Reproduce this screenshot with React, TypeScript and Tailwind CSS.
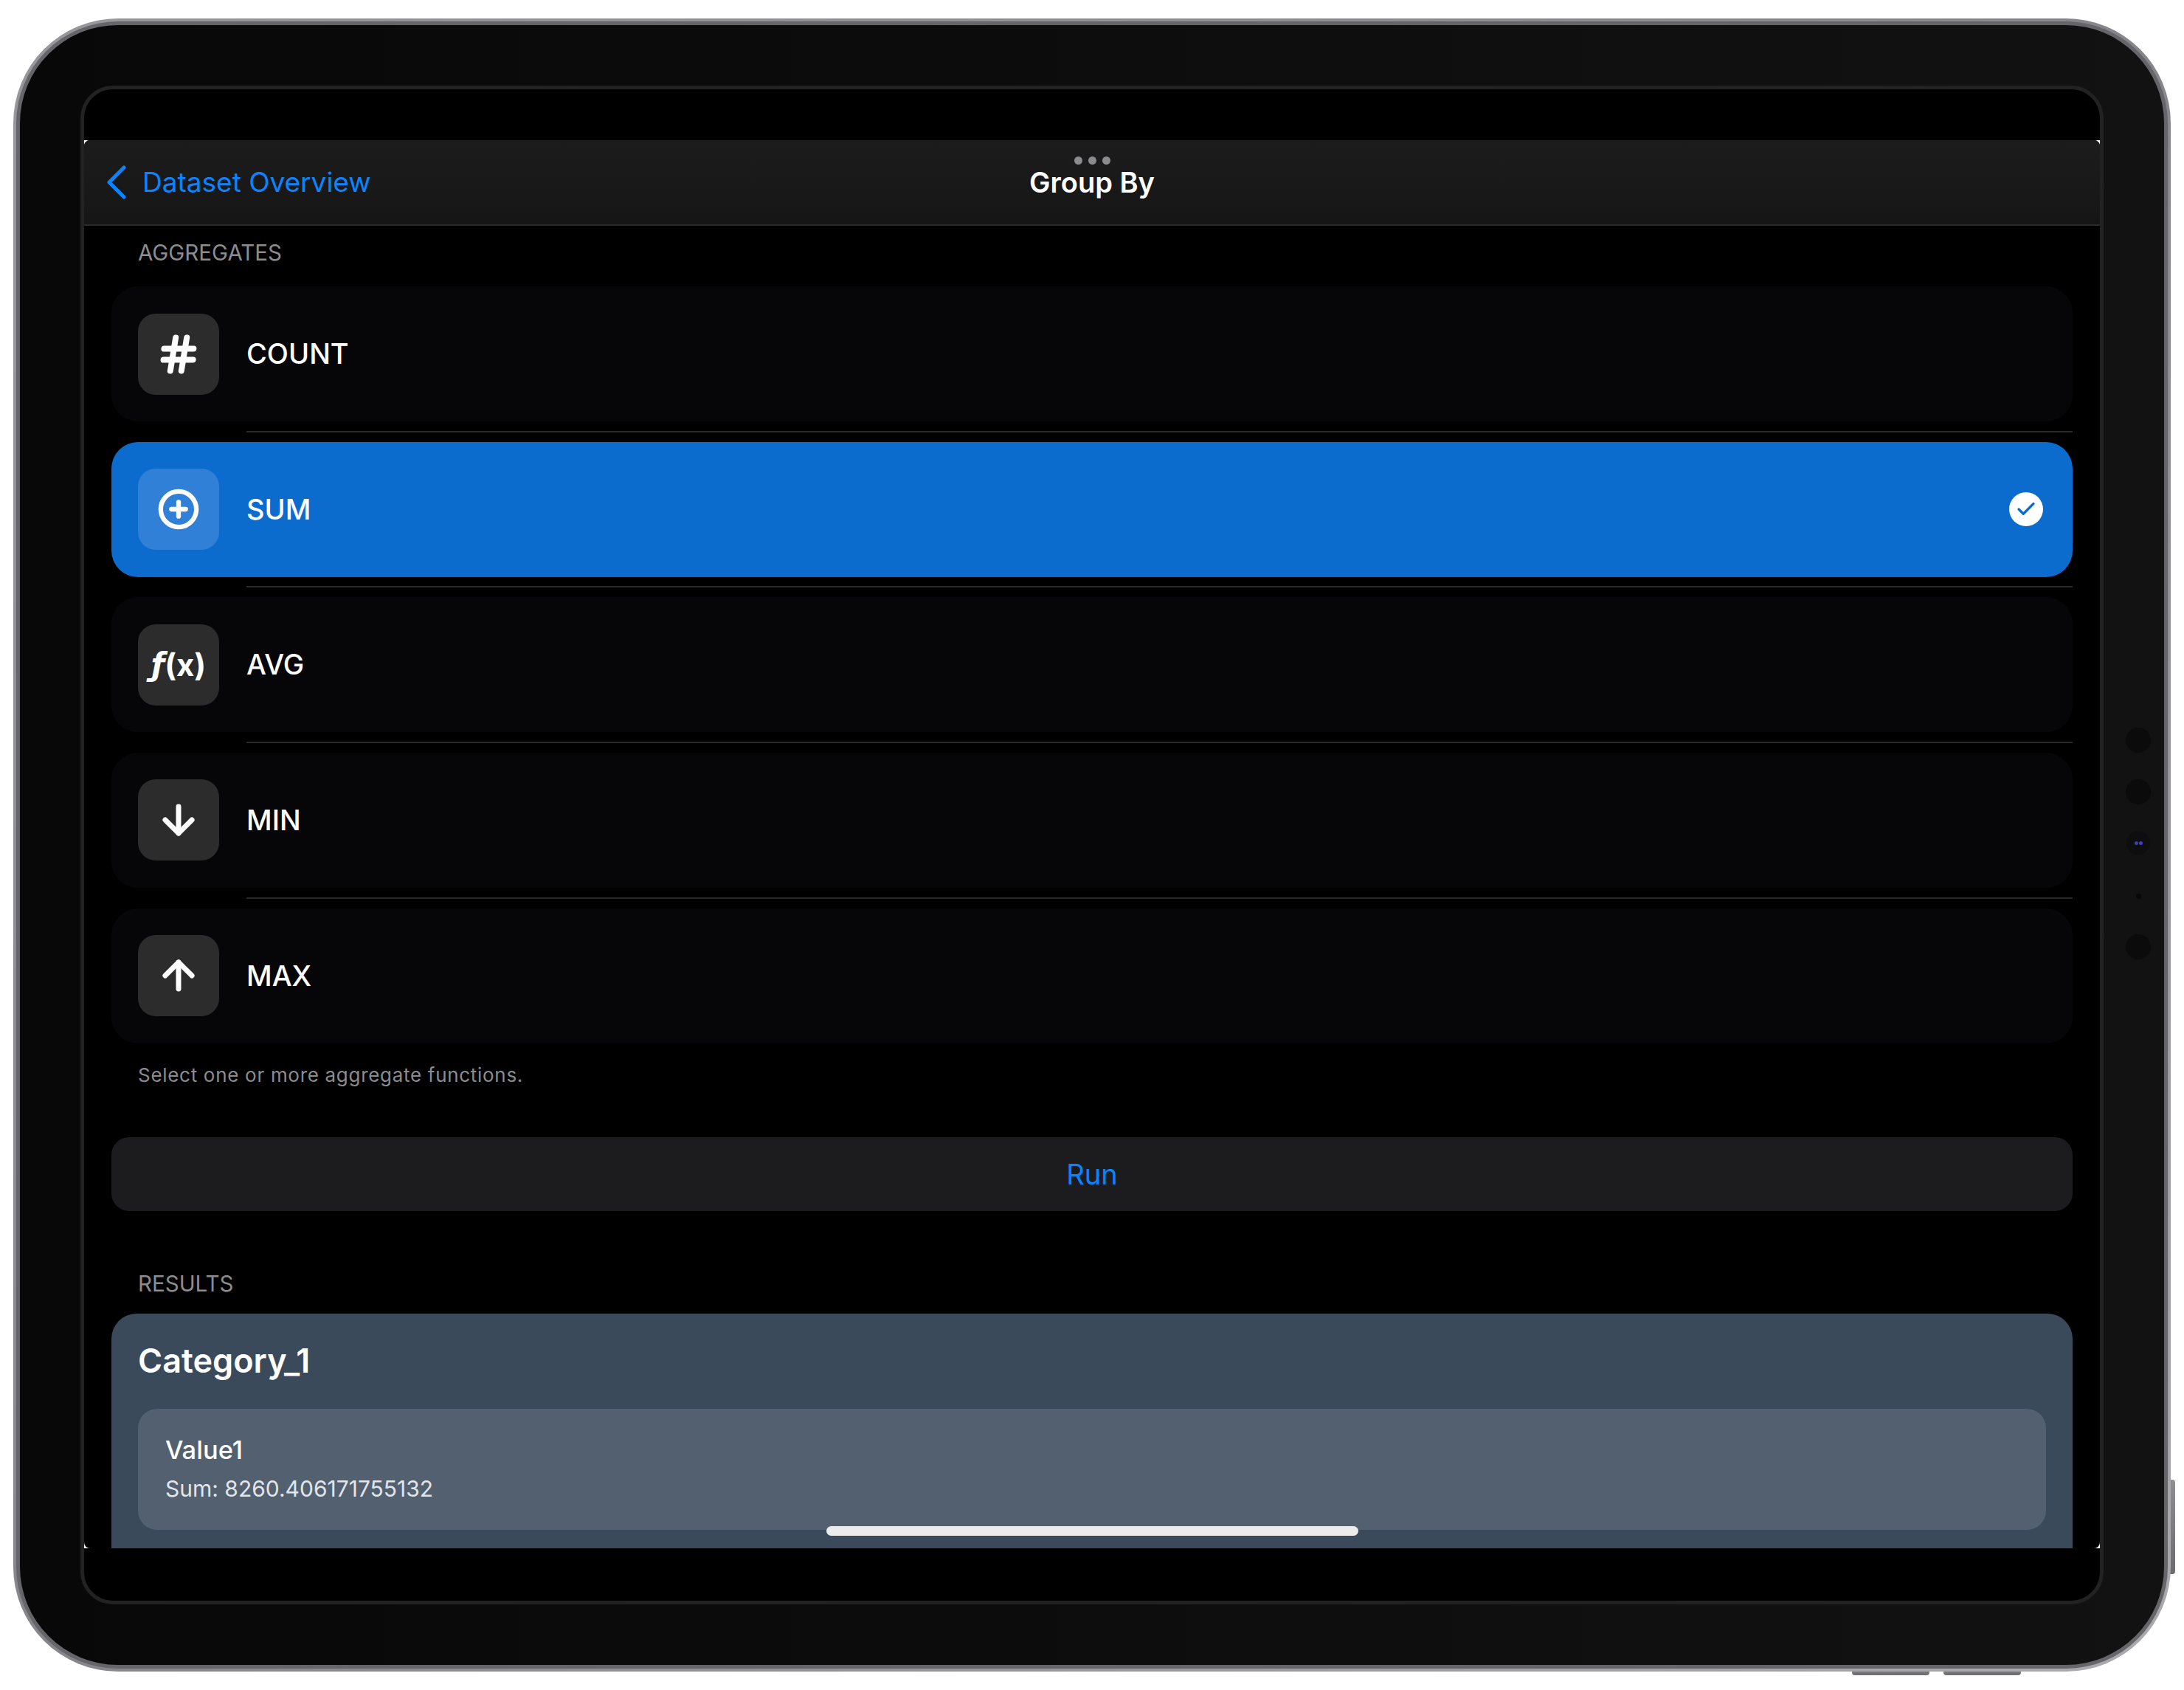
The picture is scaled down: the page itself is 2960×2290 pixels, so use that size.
import { Hash, CirclePlus, ArrowDown, ArrowUp, Check } from 'lucide-react'
import type { ReactNode } from 'react'

const font = { fontFamily: 'Inter, "Liberation Sans", sans-serif' }

type Row = { label: string; icon: ReactNode; selected?: boolean }

const rows: Row[] = [
  { label: 'COUNT', icon: <Hash className="h-[60px] w-[60px] -skew-x-3" strokeWidth={3.2} /> },
  { label: 'SUM', icon: <CirclePlus className="h-[58px] w-[58px]" strokeWidth={2.6} />, selected: true },
  {
    label: 'AVG',
    icon: (
      <span className="flex items-center text-[42px] leading-none font-bold">
        <i className="[font-family:'DejaVu_Sans',sans-serif]">ƒ</i>
        <span>(x)</span>
      </span>
    ),
  },
  { label: 'MIN', icon: <ArrowDown className="h-[62px] w-[62px]" strokeWidth={2.7} /> },
  { label: 'MAX', icon: <ArrowUp className="h-[62px] w-[62px]" strokeWidth={2.7} /> },
]

function AggregateRow({ label, icon, selected }: Row) {
  return (
    <div
      className={`flex h-[183px] items-center rounded-[36px] pr-[40px] pl-[36px] ${
        selected ? 'bg-[#0c6cce]' : 'bg-[#060609]'
      }`}
    >
      <div
        className={`flex h-[110px] w-[110px] items-center justify-center rounded-[24px] text-white ${
          selected ? 'bg-[#3180d8]' : 'bg-[#2c2c2d]'
        }`}
      >
        {icon}
      </div>
      <span className="ml-[37px] flex-1 text-[38px] font-medium text-white">{label}</span>
      {selected && (
        <span className="flex h-[46px] w-[46px] items-center justify-center rounded-full bg-white">
          <Check className="h-[30px] w-[30px] text-[#0c6cce]" strokeWidth={2.6} />
        </span>
      )}
    </div>
  )
}

function Metal({ className }: { className: string }) {
  return <div className={`absolute bg-gradient-to-b from-[#8f8f93] to-[#6c6c70] ${className}`} />
}

export default function App() {
  return (
    <div className="min-h-[2290px] w-[2960px] bg-white pt-[25px] pl-[18px]" style={font}>
      <div className="relative h-[2240px] w-[2924px]">
        <Metal className="top-[1980px] -right-[6px] h-[128px] w-[12px] rounded-r-[4px]" />
        <Metal className="-bottom-[5px] left-[2492px] h-[12px] w-[105px] rounded-b-[4px]" />
        <Metal className="-bottom-[5px] left-[2616px] h-[12px] w-[105px] rounded-b-[4px]" />

        <div className="relative h-full w-full rounded-[142px] bg-gradient-to-br from-[#98989c] via-[#85858a] to-[#ababaf] p-[4px]">
          <div className="h-full w-full rounded-[138px] bg-[#66666a] p-[5px]">
            <div className="h-full w-full rounded-[133px] bg-gradient-to-r from-[#080808] to-[#121212] px-[82px] pt-[82px] pb-[81px]">
              <div className="h-[2058px] w-[2742px] overflow-hidden rounded-[44px] border-[5px] border-[#222223] bg-black pt-[69px]">
                {/* the app window, white only shows in its tiny corners */}
                <div className="h-[1908px] w-[2732px] bg-white">
                  <div className="relative h-full overflow-hidden rounded-[8px] bg-black">
                    <header className="relative grid h-[116px] grid-cols-[1fr_auto_1fr] items-center border-b-2 border-[#2a2a2b] bg-gradient-to-b from-[#1c1c1c] to-[#161616]">
                      <div className="flex items-center pl-[31px]">
                        <svg width="26" height="46" viewBox="0 0 26 46" fill="none" className="mt-[-1px]">
                          <path d="M23 3 L3 23 L23 43" stroke="#0a84ff" strokeWidth="5" strokeLinecap="round" strokeLinejoin="round" />
                        </svg>
                        <span className="ml-[22px] text-[37px] text-[#0a84ff]">Dataset Overview</span>
                      </div>
                      <span className="text-[38px] font-semibold text-white">Group By</span>
                      <div />
                      <div className="absolute inset-x-0 top-[22px] flex justify-center gap-[8px]">
                        <span className="h-[11px] w-[11px] rounded-full bg-[#8b8b8d]" />
                        <span className="h-[11px] w-[11px] rounded-full bg-[#8b8b8d]" />
                        <span className="h-[11px] w-[11px] rounded-full bg-[#8b8b8d]" />
                      </div>
                    </header>

                    <div className="h-[82px] pt-[16px] pl-[73px] text-[29.5px] leading-[40px] text-[#8c8c90]">AGGREGATES</div>

                    <div className="px-[37px]">
                      {rows.map((row, i) => (
                        <div key={row.label}>
                          {i > 0 && (
                            <div className="flex h-[27.67px] items-center pl-[183px]">
                              <div className="h-[2px] w-full bg-[#2a2a2b]" />
                            </div>
                          )}
                          <AggregateRow {...row} />
                        </div>
                      ))}
                    </div>

                    <div className="mt-[26px] pl-[73px] text-[26px] leading-[34px] tracking-[0.7px] text-[#8c8c90]">
                      Select one or more aggregate functions.
                    </div>

                    <div className="mx-[37px] mt-[67px] flex h-[100px] items-center justify-center rounded-[24px] bg-[#1c1c1e] pt-[2px] text-[38px] text-[#0a84ff]">
                      Run
                    </div>

                    <div className="mt-[80px] pl-[73px] text-[29.5px] leading-[36px] text-[#8c8c90]">RESULTS</div>

                    <div className="mx-[37px] mt-[23px] h-[400px] rounded-t-[34px] bg-[#3a4a5a] px-[36px] pt-[39px]">
                      <div className="text-[45px] leading-[50px] font-semibold text-white">Category_1</div>
                      <div className="mt-[40px] h-[164px] rounded-[26px] bg-[#536070] pt-[36px] pl-[37px]">
                        <div className="text-[34.5px] leading-[40px] font-medium text-white">Value1</div>
                        <div className="mt-[12px] text-[30px] leading-[40px] text-[#e2e5e9]">Sum: 8260.406171755132</div>
                      </div>
                    </div>

                    {/* home indicator */}
                    <div className="absolute top-[1878px] left-[1006px] h-[13px] w-[721px] rounded-full bg-[#ececec]" />
                  </div>
                </div>
              </div>
            </div>
          </div>
        </div>

        {/* front sensors in the bezel */}
        <div className="absolute top-[961px] left-[2863px] flex w-[34px] flex-col items-center">
          <div className="h-[34px] w-[34px] rounded-full bg-[#0b0b0b]" />
          <div className="mt-[36px] h-[34px] w-[34px] rounded-full bg-[#0b0b0b]" />
          <div className="mt-[36px] flex h-[32px] w-[32px] items-center justify-center gap-[1px] rounded-full bg-[#0e0e10]">
            <div className="h-[5px] w-[5px] rounded-full bg-[#3f3fa8]" />
            <div className="h-[5px] w-[5px] rounded-full bg-[#4a3fc0]" />
          </div>
          <div className="mt-[53px] h-[7px] w-[7px] rounded-full bg-[#080808]" />
          <div className="mt-[48px] h-[34px] w-[34px] rounded-full bg-[#0b0b0b]" />
        </div>
      </div>
    </div>
  )
}
